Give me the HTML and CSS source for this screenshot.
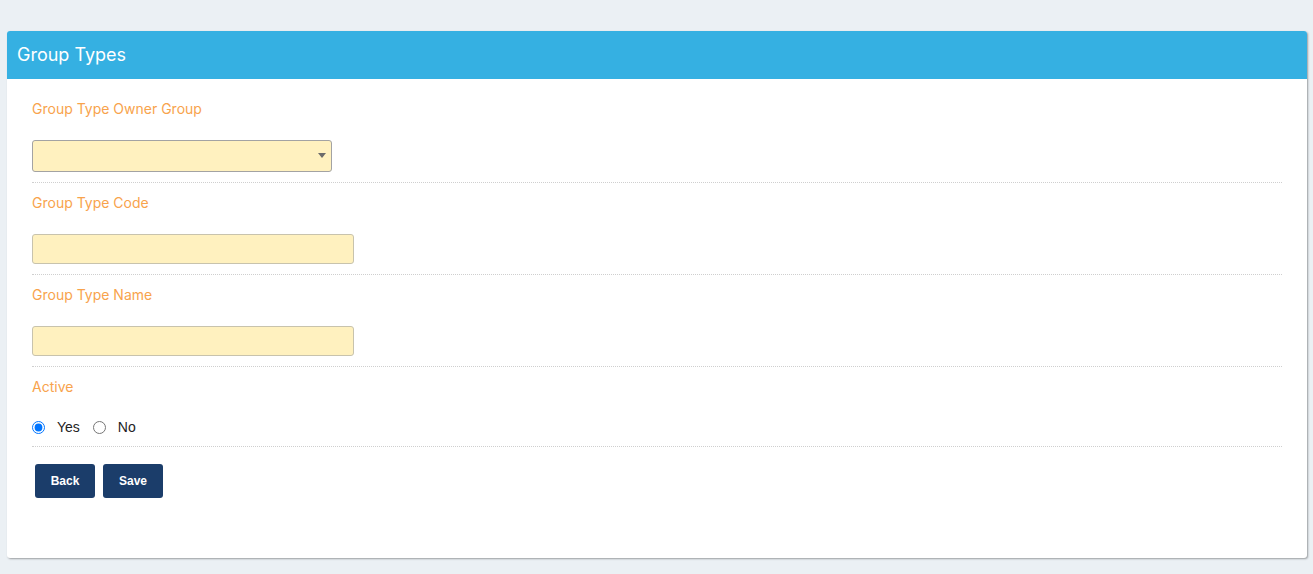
FILE: index.html
```html
<!DOCTYPE html>
<html>
<head>
<meta charset="utf-8">
<link rel="stylesheet" href="styles.css">
</head>
<body>
<div class="card">
  <div class="card-header">Group Types</div>
  <div class="card-body">
    <div class="group">
      <div class="label">Group Type Owner Group</div>
      <div class="select-wrap">
        <select class="select"><option></option></select>
      </div>
    </div>
    <div class="group">
      <div class="label">Group Type Code</div>
      <input class="input" type="text">
    </div>
    <div class="group">
      <div class="label">Group Type Name</div>
      <input class="input" type="text">
    </div>
    <div class="group group-radio">
      <div class="label">Active</div>
      <div class="radios">
        <label class="radio"><input type="radio" name="active" checked><span>Yes</span></label>
        <label class="radio"><input type="radio" name="active"><span>No</span></label>
      </div>
    </div>
    <div class="actions">
      <button class="btn">Back</button>
      <button class="btn">Save</button>
    </div>
  </div>
</div>
</body>
</html>
```

FILE: styles.css
```css
html, body {
  margin: 0;
  padding: 0;
  background: #ebf0f4;
}
body {
  padding: 31px 6px 16px 7px;
  font-family: Inter, "Noto Sans", sans-serif;
}
.card {
  background: #ffffff;
  border-radius: 3px;
  box-shadow: 1px 1px 2px rgba(0,0,0,0.35);
  overflow: hidden;
}
.card-header {
  height: 48px;
  background: #35b0e2;
  color: #ffffff;
  font-size: 18px;
  line-height: 48px;
  padding-left: 10px;
}
.card-body {
  padding: 10px 25px 60px 25px;
}
.group {
  padding: 10px 0 10px 0;
  border-bottom: 1px dotted #cfcfcf;
}
.label {
  color: #f8a34c;
  font-size: 14px;
  line-height: 20px;
}
.select-wrap {
  position: relative;
  width: 300px;
  margin-top: 21px;
}
.select {
  display: block;
  appearance: none;
  -webkit-appearance: none;
  width: 300px;
  height: 32px;
  margin: 0;
  background: #fff1bf;
  border: 1px solid #a3a3a3;
  border-radius: 3px;
}
.select-wrap::after {
  content: "";
  position: absolute;
  right: 6px;
  top: 13px;
  border-left: 4px solid transparent;
  border-right: 4px solid transparent;
  border-top: 5px solid #6b6b6b;
}
.input {
  display: block;
  box-sizing: border-box;
  width: 322px;
  height: 30px;
  margin: 21px 0 0 0;
  background: #fff1bf;
  border: 1px solid #c8c3ad;
  border-radius: 3px;
}
.group-radio {
  padding-bottom: 9px;
}
.radios {
  display: flex;
  gap: 13px;
  margin-top: 20px;
  height: 20px;
  align-items: center;
}
.radio {
  display: flex;
  align-items: center;
  font-family: "Liberation Sans", Arial, sans-serif;
  font-size: 14px;
  color: #222222;
}
.radio input {
  margin: 0 12px 0 0;
  width: 13px;
  height: 13px;
}
.actions {
  display: flex;
  gap: 8px;
  padding: 17px 0 0 3px;
}
.btn {
  width: 60px;
  height: 34px;
  background: #1b3d6a;
  color: #ffffff;
  border: none;
  border-radius: 3px;
  font-family: "Liberation Sans", Arial, sans-serif;
  font-size: 12px;
  font-weight: bold;
  padding: 0;
}
```
